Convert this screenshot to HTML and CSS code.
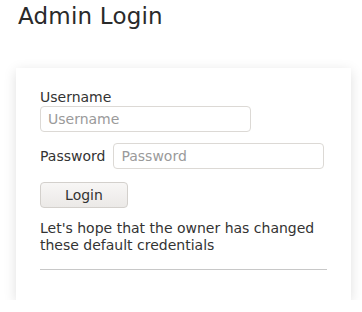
FILE: index.html
```html
<!DOCTYPE html>
<html lang="en">
<head>
<meta charset="UTF-8" />
<meta name="viewport" content="width=device-width, initial-scale=1" />
<title>Admin Login</title>
<link rel="stylesheet" href="styles.css">
</head>
<body>

<h1 class="title">Admin Login</h1>

<div class="card">
  <form class="login-form" autocomplete="off">
    <label class="field-label" for="username">Username</label>
    <input class="field" type="text" id="username" name="username" placeholder="Username" />

    <div class="row">
      <label class="field-label inline" for="password">Password</label>
      <input class="field" type="password" id="password" name="password" placeholder="Password" />
    </div>

    <button class="btn" type="submit">Login</button>

    <p class="note">Let's hope that the owner has changed these default credentials</p>
    <hr class="rule" />
  </form>
</div>

</body>
</html>
```

FILE: styles.css
```css
body {
  margin: 0;
  background-color: #fff;
  color: #333;
  font-family: "DejaVu Sans", "Liberation Sans", Arial, sans-serif;
  font-size: 14px;
}

.title {
  margin: 0;
  padding: 2px 0 0 18px;
  font-size: 23px;
  font-weight: normal;
  letter-spacing: 0.2px;
  line-height: 28px;
  color: #2a2a2a;
}

.card {
  margin: 38px 0 0 16px;
  width: 335px;
  box-sizing: border-box;
  padding: 20px 24px 30px;
  background-color: #fff;
  box-shadow: 0 3px 12px rgba(0, 0, 0, 0.13);
}

.login-form {
  display: flex;
  flex-direction: column;
  align-items: flex-start;
}

.field-label {
  display: block;
  line-height: 18px;
  color: #333;
}

.field-label.inline {
  display: inline;
  margin-right: 8px;
}

.field {
  width: 211px;
  height: 26px;
  box-sizing: border-box;
  padding: 3px 7px;
  border: 1px solid #dcd9d5;
  border-radius: 4px;
  font-family: inherit;
  font-size: 14px;
  color: #333;
}

.field::placeholder {
  color: #9a9a9a;
}

.row {
  display: flex;
  align-items: center;
  margin-top: 11px;
}

.btn {
  margin-top: 13px;
  width: 88px;
  height: 26px;
  border: 1px solid #d3d0cc;
  border-radius: 4px;
  background: linear-gradient(#f7f6f5, #ebe9e7);
  font-family: inherit;
  font-size: 14px;
  color: #333;
  cursor: pointer;
}

.note {
  margin: 12px 0 0;
  line-height: 17px;
  width: 287px;
}

.rule {
  align-self: stretch;
  margin: 15px 0 0;
  border: none;
  border-top: 1px solid #c8c8c8;
}
```
